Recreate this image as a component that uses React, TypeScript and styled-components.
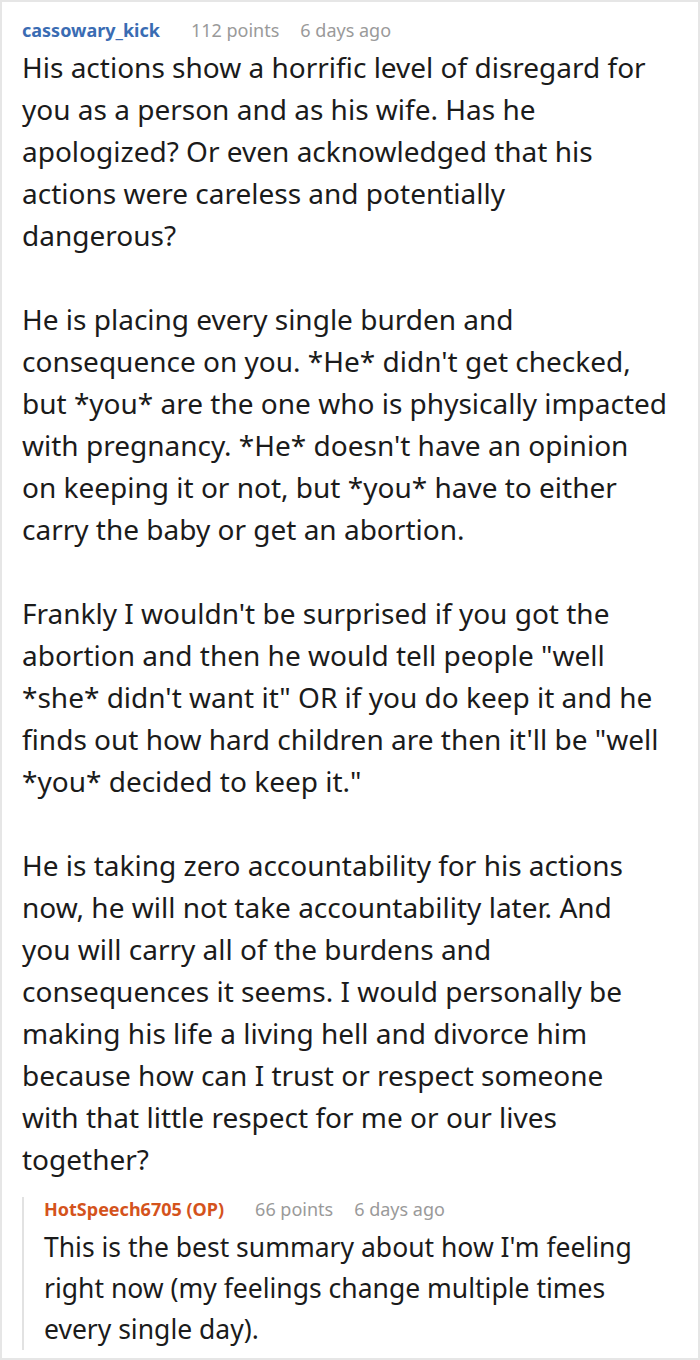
import React from "react";
import styled, { createGlobalStyle } from "styled-components";

const Global = createGlobalStyle`
  html, body { margin: 0; padding: 0; background: #fff; }
  * { box-sizing: border-box; }
`;

const Page = styled.div`
  width: 700px;
  height: 1360px;
  border: 2px solid #e6e6e6;
  padding: 16px 20px 0 20px;
  font-family: "Noto Sans", "Open Sans", sans-serif;
  color: #1b1b1b;
  overflow: hidden;
`;

const Meta = styled.div`
  display: flex;
  align-items: baseline;
  font-size: 18px;
  line-height: 24px;
  white-space: nowrap;
`;

const Author = styled.span<{ $color: string }>`
  font-weight: 700;
  color: ${(p) => p.$color};
  margin-right: 31px;
`;

const Info = styled.span`
  color: #9a9a9a;
  & + & {
    margin-left: 21px;
  }
`;

const Body = styled.div`
  margin-top: 4px;
  font-size: 28px;
  line-height: 42px;
  white-space: pre-line;
  p {
    margin: 0 0 42px 0;
  }
  p:last-child {
    margin-bottom: 0;
  }
`;

const Reply = styled.div`
  margin-top: 17px;
  border-left: 2px solid #e2e2e2;
  padding-left: 20px;
`;

const ReplyBody = styled.div`
  margin-top: 6px;
  font-size: 26.5px;
  line-height: 41px;
  white-space: pre-line;
`;

const paragraphs = [
  `His actions show a horrific level of disregard for
you as a person and as his wife. Has he
apologized? Or even acknowledged that his
actions were careless and potentially
dangerous?`,
  `He is placing every single burden and
consequence on you. *He* didn't get checked,
but *you* are the one who is physically impacted
with pregnancy. *He* doesn't have an opinion
on keeping it or not, but *you* have to either
carry the baby or get an abortion.`,
  `Frankly I wouldn't be surprised if you got the
abortion and then he would tell people "well
*she* didn't want it" OR if you do keep it and he
finds out how hard children are then it'll be "well
*you* decided to keep it."`,
  `He is taking zero accountability for his actions
now, he will not take accountability later. And
you will carry all of the burdens and
consequences it seems. I would personally be
making his life a living hell and divorce him
because how can I trust or respect someone
with that little respect for me or our lives
together?`,
];

const replyText = `This is the best summary about how I'm feeling
right now (my feelings change multiple times
every single day).`;

export default function App() {
  return (
    <>
      <Global />
      <Page>
        <Meta>
          <Author $color="#3a6cb3">cassowary_kick</Author>
          <Info>112 points</Info>
          <Info>6 days ago</Info>
        </Meta>
        <Body>
          {paragraphs.map((t, i) => (
            <p key={i}>{t}</p>
          ))}
        </Body>
        <Reply>
          <Meta>
            <Author $color="#d4531c">HotSpeech6705 (OP)</Author>
            <Info>66 points</Info>
            <Info>6 days ago</Info>
          </Meta>
          <ReplyBody>{replyText}</ReplyBody>
        </Reply>
      </Page>
    </>
  );
}
